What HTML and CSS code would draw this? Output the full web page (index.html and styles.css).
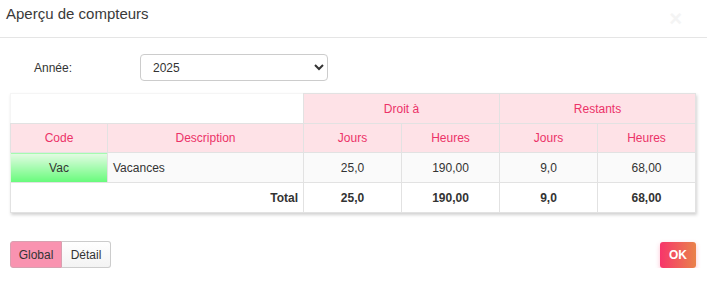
FILE: index.html
```html
<!DOCTYPE html>
<html>

<head>
    <title>Aperçu de compteurs</title>
    <meta charset="UTF-8">
    <link rel="stylesheet" href="styles.css">
</head>

<body>
    <div class="modal">
        <div class="modal-header">
            <h4>Aperçu de compteurs</h4>
            <span class="close">&times;</span>
        </div>
        <div class="modal-body">
            <div class="form-row">
                <label for="annee">Année:</label>
                <select id="annee">
                    <option>2025</option>
                </select>
            </div>
            <table class="counters">
                <colgroup>
                    <col class="c-code">
                    <col class="c-desc">
                    <col class="c-num">
                    <col class="c-num">
                    <col class="c-num">
                    <col class="c-num">
                </colgroup>
                <thead>
                    <tr>
                        <th colspan="2" class="blank"></th>
                        <th colspan="2">Droit à</th>
                        <th colspan="2">Restants</th>
                    </tr>
                    <tr class="sub">
                        <th>Code</th>
                        <th>Description</th>
                        <th>Jours</th>
                        <th>Heures</th>
                        <th>Jours</th>
                        <th>Heures</th>
                    </tr>
                </thead>
                <tbody>
                    <tr class="data">
                        <td class="code">Vac</td>
                        <td class="desc">Vacances</td>
                        <td>25,0</td>
                        <td>190,00</td>
                        <td>9,0</td>
                        <td>68,00</td>
                    </tr>
                    <tr class="total">
                        <td colspan="2" class="label">Total</td>
                        <td>25,0</td>
                        <td>190,00</td>
                        <td>9,0</td>
                        <td>68,00</td>
                    </tr>
                </tbody>
            </table>
        </div>
        <div class="modal-footer">
            <div class="btn-group">
                <button class="btn active">Global</button>
                <button class="btn">Détail</button>
            </div>
            <button class="btn-ok">OK</button>
        </div>
    </div>
</body>

</html>
```

FILE: styles.css
```css
body {
    font-family: Arial, "Liberation Sans", sans-serif;
    margin: 0;
    padding: 0;
    background-color: #fff;
    color: #333;
}

.modal {
    width: 707px;
}

.modal-header {
    display: flex;
    justify-content: space-between;
    align-items: center;
    height: 37px;
    padding: 0 25px 0 6px;
    border-bottom: 1px solid #e5e5e5;
}

.modal-header h4 {
    margin: 0;
    font-size: 15px;
    font-weight: normal;
    color: #3a3a3a;
    position: relative;
    top: -5px;
}

.close {
    font-size: 22px;
    font-weight: bold;
    color: #f4f4f4;
}

.modal-body {
    padding: 16px 10px 0 10px;
}

.form-row {
    display: flex;
    align-items: center;
    height: 27px;
    margin-bottom: 12px;
}

.form-row label {
    width: 130px;
    padding-left: 24px;
    box-sizing: border-box;
    font-size: 12px;
    color: #333;
}

.form-row select {
    width: 188px;
    height: 27px;
    padding: 0 8px;
    font-family: Arial, "Liberation Sans", sans-serif;
    font-size: 12px;
    color: #333;
    background-color: #fff;
    border: 1px solid #ccc;
    border-radius: 4px;
}

.counters {
    width: 686px;
    border-collapse: collapse;
    table-layout: fixed;
    font-size: 12px;
    box-shadow: 1px 2px 3px rgba(0, 0, 0, 0.18);
}

.c-code {
    width: 97px;
}

.c-desc {
    width: 196px;
}

.c-num {
    width: 98px;
}

.counters th,
.counters td {
    height: 29px;
    padding: 0 5px;
    border: 1px solid #e2e2e2;
    text-align: center;
}

.counters tr.sub th {
    height: 28px;
}

.counters th {
    font-weight: normal;
    background-color: #fee2e7;
    color: #ec3268;
}

.counters th.blank {
    background-color: #fff;
    border-top-color: #f5f5f5;
    border-left-color: #f5f5f5;
}

.counters tr.data td {
    background-color: #fafafa;
    color: #333;
}

.counters td.code {
    background: linear-gradient(to bottom, #e4fbe4, #66fb7a);
    border-left-color: #e0f8e0;
}

.counters td.desc {
    text-align: left;
}

.counters tr.total td {
    font-weight: bold;
    background-color: #fff;
}

.counters tr.total td.label {
    text-align: right;
}

.modal-footer {
    display: flex;
    justify-content: space-between;
    align-items: center;
    padding: 28px 11px 0 10px;
}

.btn-group {
    display: flex;
}

.btn {
    height: 27px;
    padding: 0;
    font-family: Arial, "Liberation Sans", sans-serif;
    font-size: 12px;
    color: #333;
    background: linear-gradient(to bottom, #fff, #f3f3f3);
    border: 1px solid #ccc;
    cursor: pointer;
}

.btn:first-child {
    width: 52px;
    border-radius: 3px 0 0 3px;
}

.btn:last-child {
    width: 49px;
    border-radius: 0 3px 3px 0;
    border-left: none;
}

.btn.active {
    background: #f993b0;
    border-color: #d8a0b0;
}

.btn-ok {
    width: 36px;
    height: 26px;
    font-family: Arial, "Liberation Sans", sans-serif;
    font-size: 12px;
    font-weight: bold;
    color: #fff;
    background: linear-gradient(to right, #f7356b, #e9824a);
    border: none;
    border-radius: 3px;
    box-shadow: 0 2px 5px rgba(247, 53, 107, 0.3);
    cursor: pointer;
}
```
